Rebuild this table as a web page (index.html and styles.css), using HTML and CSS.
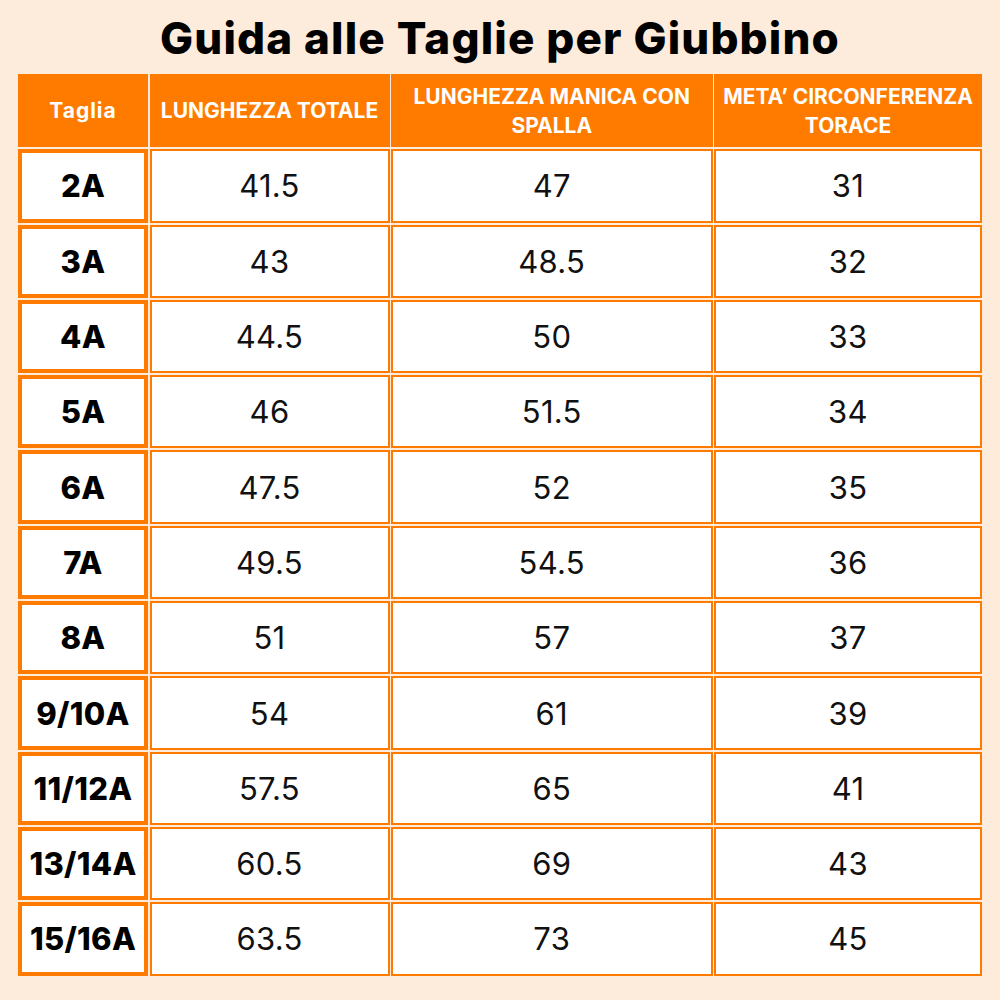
FILE: index.html
```html
<!DOCTYPE html>
<html lang="it">
<head>
<meta charset="utf-8">
<title>Guida alle Taglie per Giubbino</title>
<link rel="stylesheet" href="styles.css">
</head>
<body>
<div class="page">
  <h1 class="title">Guida alle Taglie per Giubbino</h1>
  <div class="table">
    <div class="th th-size">Taglia</div>
    <div class="th">LUNGHEZZA TOTALE</div>
    <div class="th">LUNGHEZZA MANICA CON<br>SPALLA</div>
    <div class="th">META’ CIRCONFERENZA<br>TORACE</div>

    <div class="size">2A</div><div class="val">41.5</div><div class="val">47</div><div class="val">31</div>
    <div class="size">3A</div><div class="val">43</div><div class="val">48.5</div><div class="val">32</div>
    <div class="size">4A</div><div class="val">44.5</div><div class="val">50</div><div class="val">33</div>
    <div class="size">5A</div><div class="val">46</div><div class="val">51.5</div><div class="val">34</div>
    <div class="size">6A</div><div class="val">47.5</div><div class="val">52</div><div class="val">35</div>
    <div class="size">7A</div><div class="val">49.5</div><div class="val">54.5</div><div class="val">36</div>
    <div class="size">8A</div><div class="val">51</div><div class="val">57</div><div class="val">37</div>
    <div class="size">9/10A</div><div class="val">54</div><div class="val">61</div><div class="val">39</div>
    <div class="size">11/12A</div><div class="val">57.5</div><div class="val">65</div><div class="val">41</div>
    <div class="size">13/14A</div><div class="val">60.5</div><div class="val">69</div><div class="val">43</div>
    <div class="size">15/16A</div><div class="val">63.5</div><div class="val">73</div><div class="val">45</div>
  </div>
</div>
</body>
</html>
```

FILE: styles.css
```css
html, body {
  margin: 0;
  padding: 0;
  background: #fdebdb;
}

.page {
  width: 1000px;
  height: 1000px;
  background: #fdebdb;
  font-family: Inter, "Noto Sans", "Liberation Sans", sans-serif;
  color: #111;
  display: flex;
  flex-direction: column;
  align-items: center;
}

.title {
  margin: 0;
  height: 74px;
  display: flex;
  align-items: center;
  justify-content: center;
  font-size: 44px;
  font-weight: 800;
  color: #000;
  letter-spacing: 1.15px;
  padding-top: 2px;
  box-sizing: border-box;
}

.table {
  display: grid;
  grid-template-columns: 130px 240px 321.5px 268px;
  grid-template-rows: repeat(12, 73.3px);
  column-gap: 1.5px;
  row-gap: 2px;
}

.th {
  background: #ff7b00;
  color: #fff;
  font-weight: 700;
  font-size: 21px;
  line-height: 29px;
  display: flex;
  align-items: center;
  justify-content: center;
  text-align: center;
  white-space: nowrap;
}

.th-size {
  letter-spacing: 1px;
}

.size,
.val {
  background: #fff;
  display: flex;
  align-items: center;
  justify-content: center;
  box-sizing: border-box;
  font-size: 31px;
  white-space: nowrap;
}

.size {
  border: 4px solid #ff7b00;
  font-weight: 800;
  color: #000;
  letter-spacing: 0.3px;
}

.val {
  border: 2px solid #ff7b00;
  font-weight: 400;
  color: #111;
  letter-spacing: 0.3px;
}
```
